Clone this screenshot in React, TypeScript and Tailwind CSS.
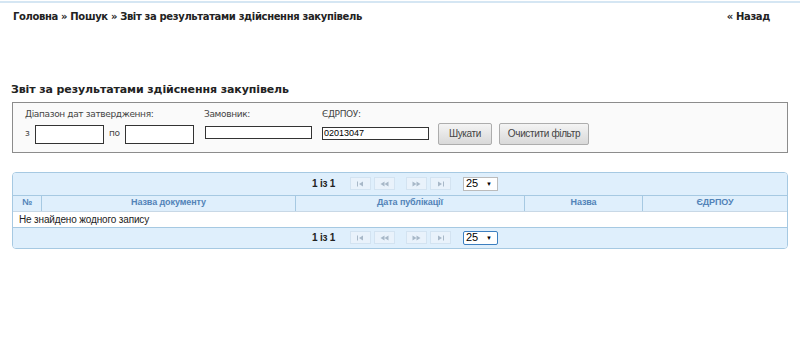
import React from "react";

const verdana = "font-['DejaVu_Sans',Verdana,sans-serif]";
const arial = "font-['Liberation_Sans',Arial,sans-serif]";

function PagerIcon({ kind }: { kind: "first" | "prev" | "next" | "last" }) {
  const c = "#a8b8c8";
  return (
    <svg width="9" height="6" viewBox="0 0 9 6" aria-hidden="true">
      {kind === "first" && (
        <>
          <rect x="1" y="0.5" width="1" height="5" fill={c} />
          <path d="M3 3 L7 0.5 V5.5 Z" fill={c} />
        </>
      )}
      {kind === "prev" && (
        <>
          <path d="M0.5 3 L4.5 0.5 V5.5 Z" fill={c} />
          <path d="M4.5 3 L8.5 0.5 V5.5 Z" fill={c} />
        </>
      )}
      {kind === "next" && (
        <>
          <path d="M0.5 0.5 L4.5 3 L0.5 5.5 Z" fill={c} />
          <path d="M4.5 0.5 L8.5 3 L4.5 5.5 Z" fill={c} />
        </>
      )}
      {kind === "last" && (
        <>
          <path d="M2 0.5 L6 3 L2 5.5 Z" fill={c} />
          <rect x="7" y="0.5" width="1" height="5" fill={c} />
        </>
      )}
    </svg>
  );
}

function PagerBtn({ kind }: { kind: "first" | "prev" | "next" | "last" }) {
  return (
    <span className="w-[21px] h-[13px] border border-[#d3e3f1] bg-[#e9f2fb] flex items-center justify-center">
      <PagerIcon kind={kind} />
    </span>
  );
}

function Pager({ focused = false }: { focused?: boolean }) {
  return (
    <div className={`${focused ? "h-[20px]" : "h-[22px]"} bg-[#dfeffc] flex items-center`}>
      <span className="ml-[299px] text-[10px] font-bold text-[#222] w-[38px] tracking-[-0.2px]">1 із 1</span>
      <div className="flex gap-[3px]">
        <PagerBtn kind="first" />
        <PagerBtn kind="prev" />
      </div>
      <div className="flex gap-[3px] ml-[11px]">
        <PagerBtn kind="next" />
        <PagerBtn kind="last" />
      </div>
      <span
        className={`ml-[12px] w-[35px] h-[14px] bg-white text-[11px] text-black flex items-center justify-between pl-[2px] pr-[5px] border ${
          focused ? "border-[#3c7fc0] rounded-[2px]" : "border-[#bbb]"
        }`}
      >
        <span className="leading-none">25</span>
        <span className="text-[6px] leading-none">▼</span>
      </span>
    </div>
  );
}

const btn = `${arial} h-[22px] border border-[#adadad] rounded-[2px] bg-gradient-to-b from-[#f4f4f4] to-[#d9d9d9] text-[10px] text-[#444]`;

export default function App() {
  return (
    <div className={`w-[800px] h-[350px] bg-white overflow-hidden ${verdana}`}>
      <div className="h-[3px] border-t-2 border-[#d5e6f3] mt-[1px]" />
      <div className="flex justify-between items-center pl-[13px] pr-[30px] mt-[5px] text-[10px] font-bold text-[#222] tracking-[-0.35px]">
        <span>Головна » Пошук » Звіт за результатами здійснення закупівель</span>
        <span>« Назад</span>
      </div>

      <h1 className="ml-[11px] mt-[58px] text-[11px] font-bold text-[#222] tracking-[-0.1px]">
        Звіт за результатами здійснення закупівель
      </h1>

      <div className="mx-[12px] mt-[3px] h-[51px] border border-[#8c8c8c] bg-[#fafafa] flex items-start text-[9px] text-[#444] tracking-[-0.35px]">
        <div className="ml-[12px] mt-[5px]">
          <div className="h-[12px] leading-[12px]">Діапазон дат затвердження:</div>
          <div className="flex items-center mt-[5px]">
            <span className="w-[10px]">з</span>
            <span className="w-[69px] h-[19px] border border-[#333] bg-white" />
            <span className="w-[21px] pl-[5px]">по</span>
            <span className="w-[69px] h-[19px] border border-[#333] bg-white" />
          </div>
        </div>
        <div className="ml-[10px] mt-[5px]">
          <div className="h-[12px] leading-[12px]">Замовник:</div>
          <div className="mt-[6px] ml-[1px] w-[107px] h-[13px] border border-[#333] bg-white" />
        </div>
        <div className="ml-[10px] mt-[5px]">
          <div className="h-[12px] leading-[12px]">ЄДРПОУ:</div>
          <div className={`${arial} mt-[7px] w-[107px] h-[13px] border border-[#333] bg-white text-[9px] tracking-normal text-black leading-[11px] pl-[1px]`}>
            02013047
          </div>
        </div>
        <button className={`${btn} ml-[9px] mt-[20px] w-[54px]`}>Шукати</button>
        <button className={`${btn} ml-[7px] mt-[20px] w-[90px]`}>Очистити фільтр</button>
      </div>

      <div className={`${arial} mx-[12px] mt-[19px] border border-[#a6c9e2] rounded-[4px] overflow-hidden`}>
        <Pager />
        <div className="flex h-[16px] bg-[#dfeffc] border-t border-[#a6c9e2] text-[9px] font-bold text-[#5283b8] tracking-[-0.1px]">
          <div className="w-[29px] flex items-center justify-center border-r border-[#a6c9e2]">№</div>
          <div className="w-[254px] flex items-center justify-center border-r border-[#a6c9e2]">Назва документу</div>
          <div className="w-[229px] flex items-center justify-center border-r border-[#a6c9e2]">Дата публікації</div>
          <div className="w-[118px] flex items-center justify-center border-r border-[#a6c9e2]">Назва</div>
          <div className="flex-1 flex items-center justify-center">ЄДРПОУ</div>
        </div>
        <div className="h-[16px] bg-white border-t border-[#c8d8e6] flex items-center pl-[6px] text-[10px] text-[#222] tracking-[-0.15px]">
          Не знайдено жодного запису
        </div>
        <div className="border-t border-[#a6c9e2]">
          <Pager focused />
        </div>
      </div>
    </div>
  );
}
